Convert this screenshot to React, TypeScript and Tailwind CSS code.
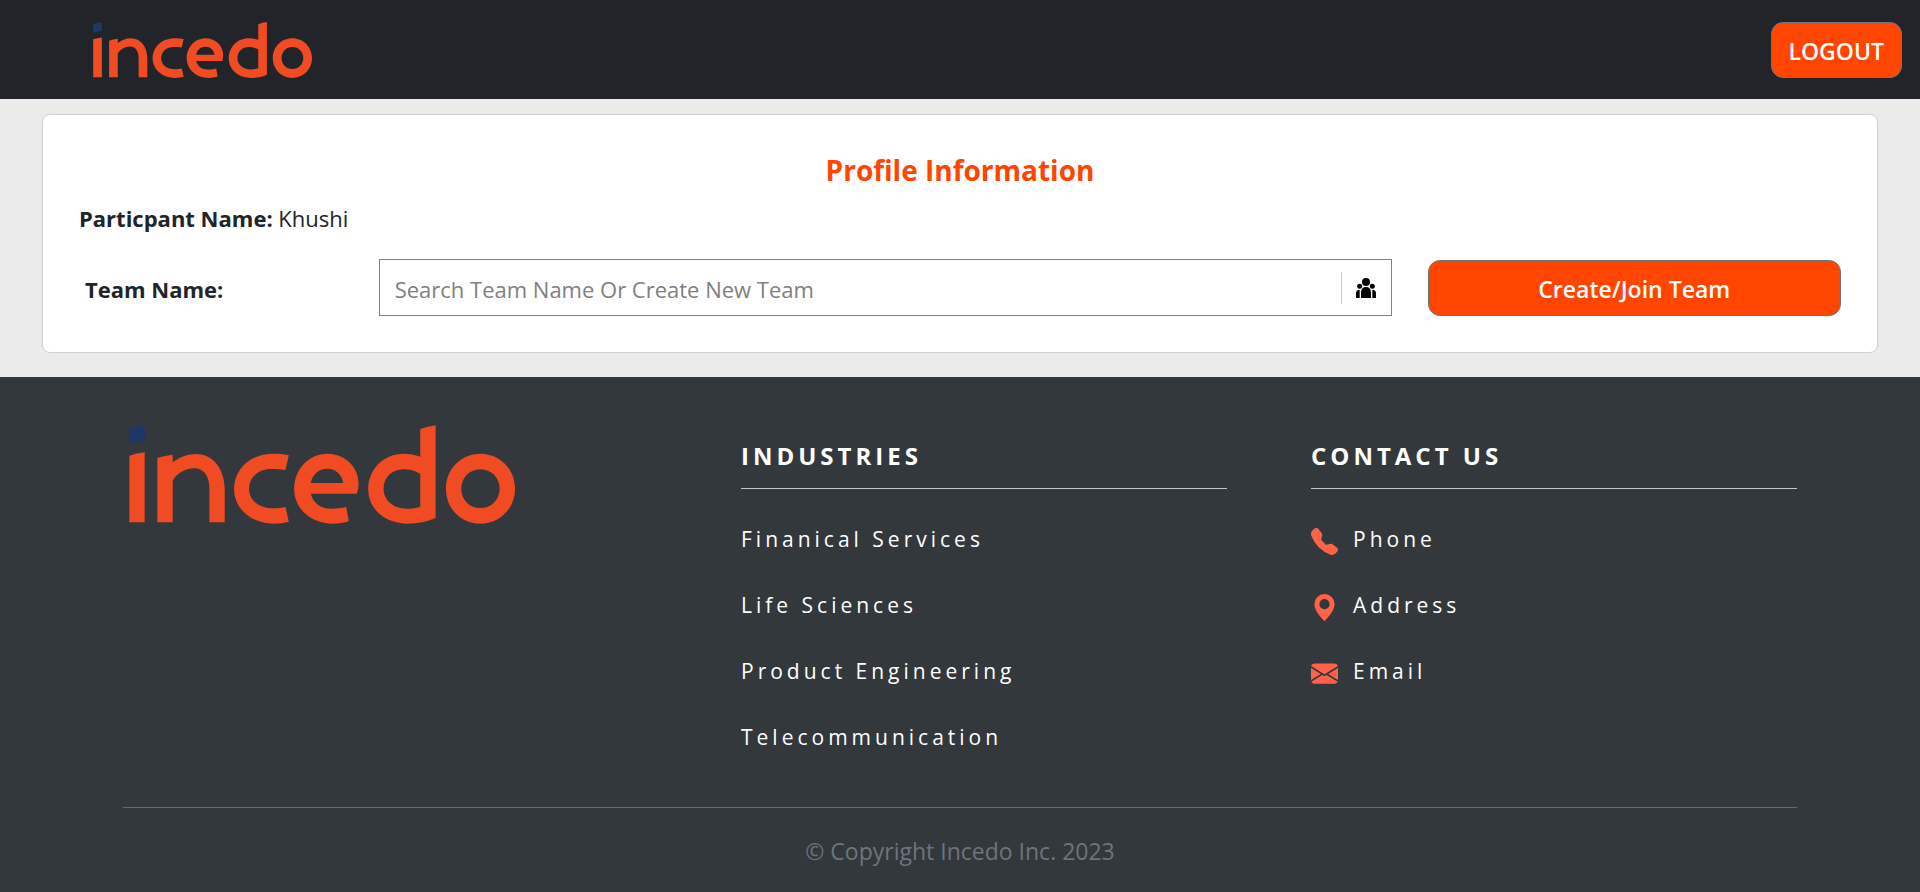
import { BsEnvelopeFill, BsGeoAltFill, BsTelephoneFill } from "react-icons/bs";

const industries = ["Finanical Services", "Life Sciences", "Product Engineering", "Telecommunication"];

const contacts = [
  { label: "Phone", Icon: BsTelephoneFill },
  { label: "Address", Icon: BsGeoAltFill },
  { label: "Email", Icon: BsEnvelopeFill },
];

function Logo({ className }: { className: string }) {
  return (
    <svg viewBox="57 47 1157 295" className={className} role="img" aria-label="incedo">
      <path d="M58 58Q80 50 104 48V94Q80 96 58 103Z" fill="#1d3768" />
      <g fill="#f04b23">
        <path d="M58 138Q80 130 104 128V338H58Z" />
        <path d="M142 145Q164 137 188 135V158C210 142 232 133 258 133C310 133 344 180 344 240V338H298V238C298 200 282 176 252 176C226 176 196 194 188 214V338H142Z" />
        <path d="M536 137C520 133 505 132 490 132C420 132 372 178 372 238C372 298 425 342 490 342C508 342 524 340 536 336L526 292C512 295 502 296 490 296C448 296 417 273 417 238C417 202 446 178 484 178C500 178 512 178 526 181Z" />
        <path fillRule="evenodd" d="M740 252H602C608 280 632 297 664 297C680 297 694 296 708 292L716 335C702 340 686 342 668 342C604 342 552 298 552 238C552 178 596 132 652 132C706 132 745 174 745 220C745 234 743 244 740 252ZM602 220H699C696 195 676 177 651 177C626 177 606 195 602 220Z" />
        <path fillRule="evenodd" d="M930 58Q952 50 976 47V325C950 337 922 342 894 342C824 342 774 298 774 238C774 178 820 132 880 132C898 132 914 135 930 141ZM930 192C914 183 898 179 880 179C845 179 820 204 820 238C820 272 850 297 890 297C904 297 918 295 930 291Z" />
        <path fillRule="evenodd" d="M1110 132C1168 132 1214 178 1214 237C1214 296 1168 342 1110 342C1052 342 1007 296 1007 237C1007 178 1052 132 1110 132ZM1110 179C1078 179 1053 204 1053 237C1053 270 1078 295 1110 295C1143 295 1168 270 1168 237C1168 204 1143 179 1110 179Z" />
      </g>
    </svg>
  );
}

function TeamIcon() {
  return (
    <svg viewBox="0 0 60 60" className="size-5" fill="currentColor" aria-hidden="true">
      <ellipse cx="30" cy="12" rx="12" ry="12" />
      <circle cx="11" cy="25" r="7.5" />
      <circle cx="49" cy="25" r="7.5" />
      <path d="M15 60V44C15 33 20 27 30 27S45 33 45 44V60Z" />
      <path d="M0 60V46C0 39 4 35 11 35V60Z" />
      <path d="M60 60V46C60 39 56 35 49 35V60Z" />
    </svg>
  );
}

export default function App() {
  return (
    <div className="flex min-h-screen flex-col bg-[#ebebeb] font-['Open_Sans','Noto_Sans',sans-serif] text-[23px] leading-9 text-[#212529]">
      <header className="flex h-[99px] items-center justify-between bg-[#212529] pr-[18px] pl-[93px]">
        <a href="#">
          <Logo className="h-14 w-[219px]" />
        </a>
        <button className="h-14 rounded-xl border border-[#6c757d] bg-[#ff4500] px-[17px] pt-0.5 font-semibold text-white">
          LOGOUT
        </button>
      </header>

      <main className="px-[42px] pt-[15px] pb-6">
        <section className="rounded-lg border border-[#cfcfcf] bg-white px-9 pt-[37px] pb-9 text-[22px]">
          <h1 className="text-center text-[28px] leading-9 font-bold text-[#ff4500]">Profile Information</h1>
          <p className="mt-3">
            <strong className="font-bold">Particpant Name:</strong> Khushi
          </p>
          <form className="mt-[23px] grid grid-cols-12 items-center gap-x-9" onSubmit={(e) => e.preventDefault()}>
            <label htmlFor="team" className="col-span-2 pt-0.5 pl-1.5 font-bold">
              Team Name:
            </label>
            <div className="col-span-7 flex h-[57px] items-center border border-[#808080]">
              <input
                id="team"
                type="text"
                placeholder="Search Team Name Or Create New Team"
                className="min-w-0 flex-1 px-[15px] pt-0.5 outline-none placeholder:text-[#808080]"
              />
              <span className="flex h-8 w-[50px] items-center justify-center border-l border-[#cccccc] text-black">
                <TeamIcon />
              </span>
            </div>
            <button className="col-span-3 h-14 rounded-xl border border-[#6c757d] bg-[#ff4500] pt-0.5 text-[23px] font-semibold text-white">
              Create/Join Team
            </button>
          </form>
        </section>
      </main>

      <footer className="flex-1 bg-[#33383c] px-[123px] pt-12 text-white">
        <div className="grid grid-cols-[534fr_486fr_486fr] gap-x-[84px]">
          <a href="#" className="pl-1.5">
            <Logo className="h-[99px] w-[386px]" />
          </a>
          <section className="pt-[13px]">
            <h2 className="border-b border-[#c8c8c8] pb-[14px] text-2xl leading-9 font-bold tracking-[4px]">INDUSTRIES</h2>
            <ul className="mt-8 flex flex-col gap-[30px] text-[21px] tracking-[4px]">
              {industries.map((name) => (
                <li key={name}>
                  <a href="#">{name}</a>
                </li>
              ))}
            </ul>
          </section>
          <section className="pt-[13px]">
            <h2 className="border-b border-[#c8c8c8] pb-[14px] text-2xl leading-9 font-bold tracking-[4px]">CONTACT US</h2>
            <ul className="mt-8 flex flex-col gap-[30px] text-[21px] tracking-[4px]">
              {contacts.map(({ label, Icon }) => (
                <li key={label}>
                  <a href="#" className="flex items-center gap-[15px]">
                    <Icon className="mt-1 size-[27px] text-[#ff6347]" />
                    {label}
                  </a>
                </li>
              ))}
            </ul>
          </section>
        </div>
        <p className="mt-[52px] border-t border-[#666b6e] pt-[25px] text-center text-[#6c757d]">
          © Copyright Incedo Inc. 2023
        </p>
      </footer>
    </div>
  );
}
